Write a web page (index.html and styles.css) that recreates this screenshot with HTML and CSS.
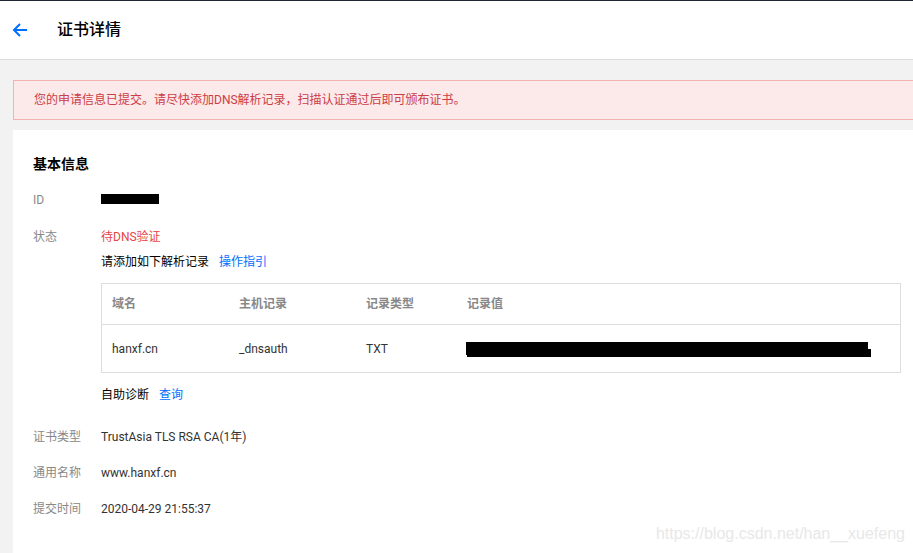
FILE: index.html
```html
<!DOCTYPE html>
<html lang="zh">
<head>
<meta charset="utf-8">
<title>证书详情</title>
<link rel="stylesheet" href="styles.css">
</head>
<body>
<div class="topline"></div>
<header class="header">
  <svg class="back" width="16" height="14" viewBox="0 0 16 14"><path d="M8 1 L2 7 L8 13 M2 7 H15" fill="none" stroke="#006eff" stroke-width="2"/></svg>
  <h1 class="title">证书详情</h1>
</header>
<main class="main">
  <div class="alert">您的申请信息已提交。请尽快添加DNS解析记录，扫描认证通过后即可颁布证书。</div>
  <section class="card">
    <h2 class="card-title">基本信息</h2>
    <div class="row row-id">
      <div class="label">ID</div>
      <div class="value"><span class="redact-id"></span></div>
    </div>
    <div class="row row-status">
      <div class="label">状态</div>
      <div class="value">
        <div class="status">待DNS验证</div>
        <div class="hint">请添加如下解析记录<a class="link">操作指引</a></div>
        <table class="dns">
          <thead>
            <tr><th class="c1">域名</th><th class="c2">主机记录</th><th class="c3">记录类型</th><th>记录值</th></tr>
          </thead>
          <tbody>
            <tr><td>hanxf.cn</td><td>_dnsauth</td><td>TXT</td><td><span class="redact-val"></span></td></tr>
          </tbody>
        </table>
        <div class="diag">自助诊断<a class="link">查询</a></div>
      </div>
    </div>
    <div class="row row-type">
      <div class="label">证书类型</div>
      <div class="value">TrustAsia TLS RSA CA(1年)</div>
    </div>
    <div class="row">
      <div class="label">通用名称</div>
      <div class="value">www.hanxf.cn</div>
    </div>
    <div class="row">
      <div class="label">提交时间</div>
      <div class="value">2020-04-29 21:55:37</div>
    </div>
  </section>
</main>
<div class="watermark">https://blog.csdn.net/han__xuefeng</div>
</body>
</html>
```
FILE: styles.css
```css
html, body {
  margin: 0;
  padding: 0;
}
body {
  background: #f2f2f2;
  font-family: Roboto, "Noto Sans CJK SC", sans-serif;
  font-size: 12px;
  line-height: 20px;
  color: #333;
  height: 553px;
  overflow: hidden;
  position: relative;
  display: flex;
  flex-direction: column;
}
.topline {
  height: 1px;
  flex: none;
  background: #1f2633;
}
.header {
  height: 58px;
  flex: none;
  background: #fff;
  border-bottom: 1px solid #dcdcdc;
  display: flex;
  align-items: center;
  padding-left: 12px;
}
.back {
  display: block;
}
.title {
  margin: 0 0 0 29px;
  font-size: 16px;
  font-weight: 500;
  color: #000;
  line-height: 24px;
}
.main {
  flex: 1;
  min-height: 0;
  display: flex;
  flex-direction: column;
  padding: 20px 0 0 13px;
}
.alert {
  height: 38px;
  flex: none;
  border: 1px solid #f3b3b3;
  border-right: none;
  background: #fce9e9;
  color: #cc3d46;
  line-height: 38px;
  padding-left: 20px;
}
.card {
  flex: 1;
  min-height: 0;
  margin-top: 10px;
  background: #fff;
  padding: 24px 20px 0 20px;
  overflow: hidden;
}
.card-title {
  margin: 0;
  font-size: 14px;
  font-weight: 700;
  line-height: 20px;
  color: #000;
}
.row {
  display: flex;
  margin-top: 16px;
}
.row-status {
  margin-top: 17px;
}
.row-type {
  margin-top: 22px;
}
.label {
  width: 68px;
  flex: none;
  color: #888;
}
.value {
  color: #333;
}
.redact-id {
  display: inline-block;
  width: 58px;
  height: 10px;
  background: #000;
  vertical-align: 0;
}
.status {
  color: #e54545;
}
.hint {
  margin-top: 5px;
  color: #000;
}
.link {
  color: #006eff;
  margin-left: 10px;
  cursor: pointer;
}
.dns {
  margin-top: 11px;
  width: 800px;
  border: 1px solid #dddddd;
  border-collapse: collapse;
  text-align: left;
}
.dns th {
  height: 40px;
  padding: 0 0 0 10px;
  color: #888;
  font-weight: 700;
  border-bottom: 1px solid #dddddd;
}
.dns td {
  height: 47px;
  padding: 0 0 0 10px;
  color: #333;
}
.dns .c1, .dns .c2 {
  width: 117px;
}
.dns .c3 {
  width: 91px;
}
.redact-val {
  display: block;
  position: relative;
  width: 402px;
  height: 13px;
  background: #000;
  margin-left: -1px;
  margin-top: -1px;
}
.redact-val::after {
  content: "";
  position: absolute;
  left: 1px;
  top: 7px;
  width: 404px;
  height: 8px;
  background: #000;
}
.diag {
  margin-top: 12px;
  color: #000;
}
.watermark {
  position: absolute;
  right: 8px;
  bottom: 10px;
  font-family: "Liberation Sans", Arial, sans-serif;
  font-size: 16px;
  color: #e8e8e8;
  line-height: 18px;
}
```
